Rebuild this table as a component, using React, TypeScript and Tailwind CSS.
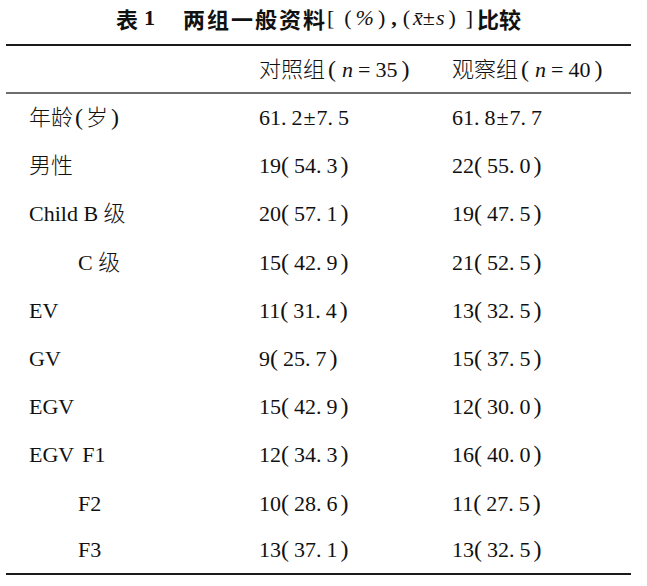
import React from 'react';

interface Row {
  label: React.ReactNode;
  indent?: boolean;
  control: string;
  observe: string;
}

// 数字格式：括号、小数点后留出空隙，模仿排版
function Num({ value }: { value: string }) {
  return (
    <span className="whitespace-nowrap">
      {value.split('').map((ch, i) => {
        if (ch === '(') return <span key={i} className="mr-[5px] text-[24px] leading-none">(</span>;
        if (ch === ')') return <span key={i} className="ml-[3px] text-[24px] leading-none">)</span>;
        if (ch === '.') return <span key={i} className="mr-[5px]">.</span>;
        if (ch === '±') return <span key={i} className="mx-[1px]">±</span>;
        return <span key={i}>{ch}</span>;
      })}
    </span>
  );
}

const rows: Row[] = [
  {
    label: (
      <>
        年龄<span className="ml-[2px] mr-[3px] text-[24px] leading-none">(</span>岁
        <span className="ml-[3px] text-[24px] leading-none">)</span>
      </>
    ),
    control: '61.2±7.5',
    observe: '61.8±7.7',
  },
  { label: '男性', control: '19(54.3)', observe: '22(55.0)' },
  { label: 'Child B 级', control: '20(57.1)', observe: '19(47.5)' },
  { label: 'C 级', indent: true, control: '15(42.9)', observe: '21(52.5)' },
  { label: 'EV', control: '11(31.4)', observe: '13(32.5)' },
  { label: 'GV', control: '9(25.7)', observe: '15(37.5)' },
  { label: 'EGV', control: '15(42.9)', observe: '12(30.0)' },
  { label: <>EGV<span className="ml-[8px]">F1</span></>, control: '12(34.3)', observe: '16(40.0)' },
  { label: 'F2', indent: true, control: '10(28.6)', observe: '11(27.5)' },
  { label: 'F3', indent: true, control: '13(37.1)', observe: '13(32.5)' },
];

function GroupHead({ name, n }: { name: string; n: string }) {
  return (
    <span className="whitespace-nowrap">
      {name}
      <span className="ml-[3px] mr-[6px] text-[24px] leading-none">(</span>
      <span className="italic">n</span>
      <span className="mx-[5px]">=</span>
      {n}
      <span className="ml-[4px] text-[24px] leading-none">)</span>
    </span>
  );
}

export default function App() {
  return (
    <div className="w-[647px] h-[586px] bg-white text-[#111] font-light font-['Liberation_Serif','Noto_Sans_CJK_SC',serif] text-[22px]">
      <div className="ml-[6px] w-[625px]">
        {/* 标题 */}
        <div className="h-[44px] pt-[4px] leading-[28px] flex justify-center whitespace-nowrap">
          <span className="font-bold font-['Noto_Sans_CJK_SC',sans-serif]">表</span>
          <span className="ml-[6px] font-bold">1</span>
          <span className="ml-[28px] font-bold tracking-[2px] font-['Noto_Sans_CJK_SC',sans-serif]">两组一般资料</span>
          <span>[</span>
          <span className="ml-[10px]">(</span>
          <span className="ml-[4px] italic">%</span>
          <span className="ml-[4px]">)</span>
          <span className="ml-[6px] font-bold">,</span>
          <span className="ml-[6px]">(</span>
          <span className="ml-[3px] italic">{'x\u0304'}</span>
          <span>±</span>
          <span className="ml-[1px] italic">s</span>
          <span className="ml-[4px]">)</span>
          <span className="ml-[10px]">]</span>
          <span className="ml-[4px] font-bold font-['Noto_Sans_CJK_SC',sans-serif]">比较</span>
        </div>

        {/* 顶线 */}
        <div className="h-[2px] bg-[#1a1a1a]" />

        {/* 表头 */}
        <div className="flex items-center h-[46px]">
          <div className="w-[253px]" />
          <div className="w-[193px]">
            <GroupHead name="对照组" n="35" />
          </div>
          <div className="flex-1">
            <GroupHead name="观察组" n="40" />
          </div>
        </div>

        {/* 栏目线 */}
        <div className="h-[1.5px] bg-[#6e6e6e]" />

        {/* 数据行 */}
        {rows.map((row, index) => (
          <div
            key={index}
            className={`flex items-center ${index === rows.length - 1 ? 'h-[46px] pb-[2px]' : 'h-[48.2px]'}`}
          >
            <div className={`w-[253px] whitespace-nowrap ${row.indent ? 'pl-[72px]' : 'pl-[23px]'}`}>
              {row.label}
            </div>
            <div className="w-[193px]">
              <Num value={row.control} />
            </div>
            <div className="flex-1">
              <Num value={row.observe} />
            </div>
          </div>
        ))}

        {/* 底线 */}
        <div className="h-[2px] bg-[#1a1a1a]" />
      </div>
    </div>
  );
}
